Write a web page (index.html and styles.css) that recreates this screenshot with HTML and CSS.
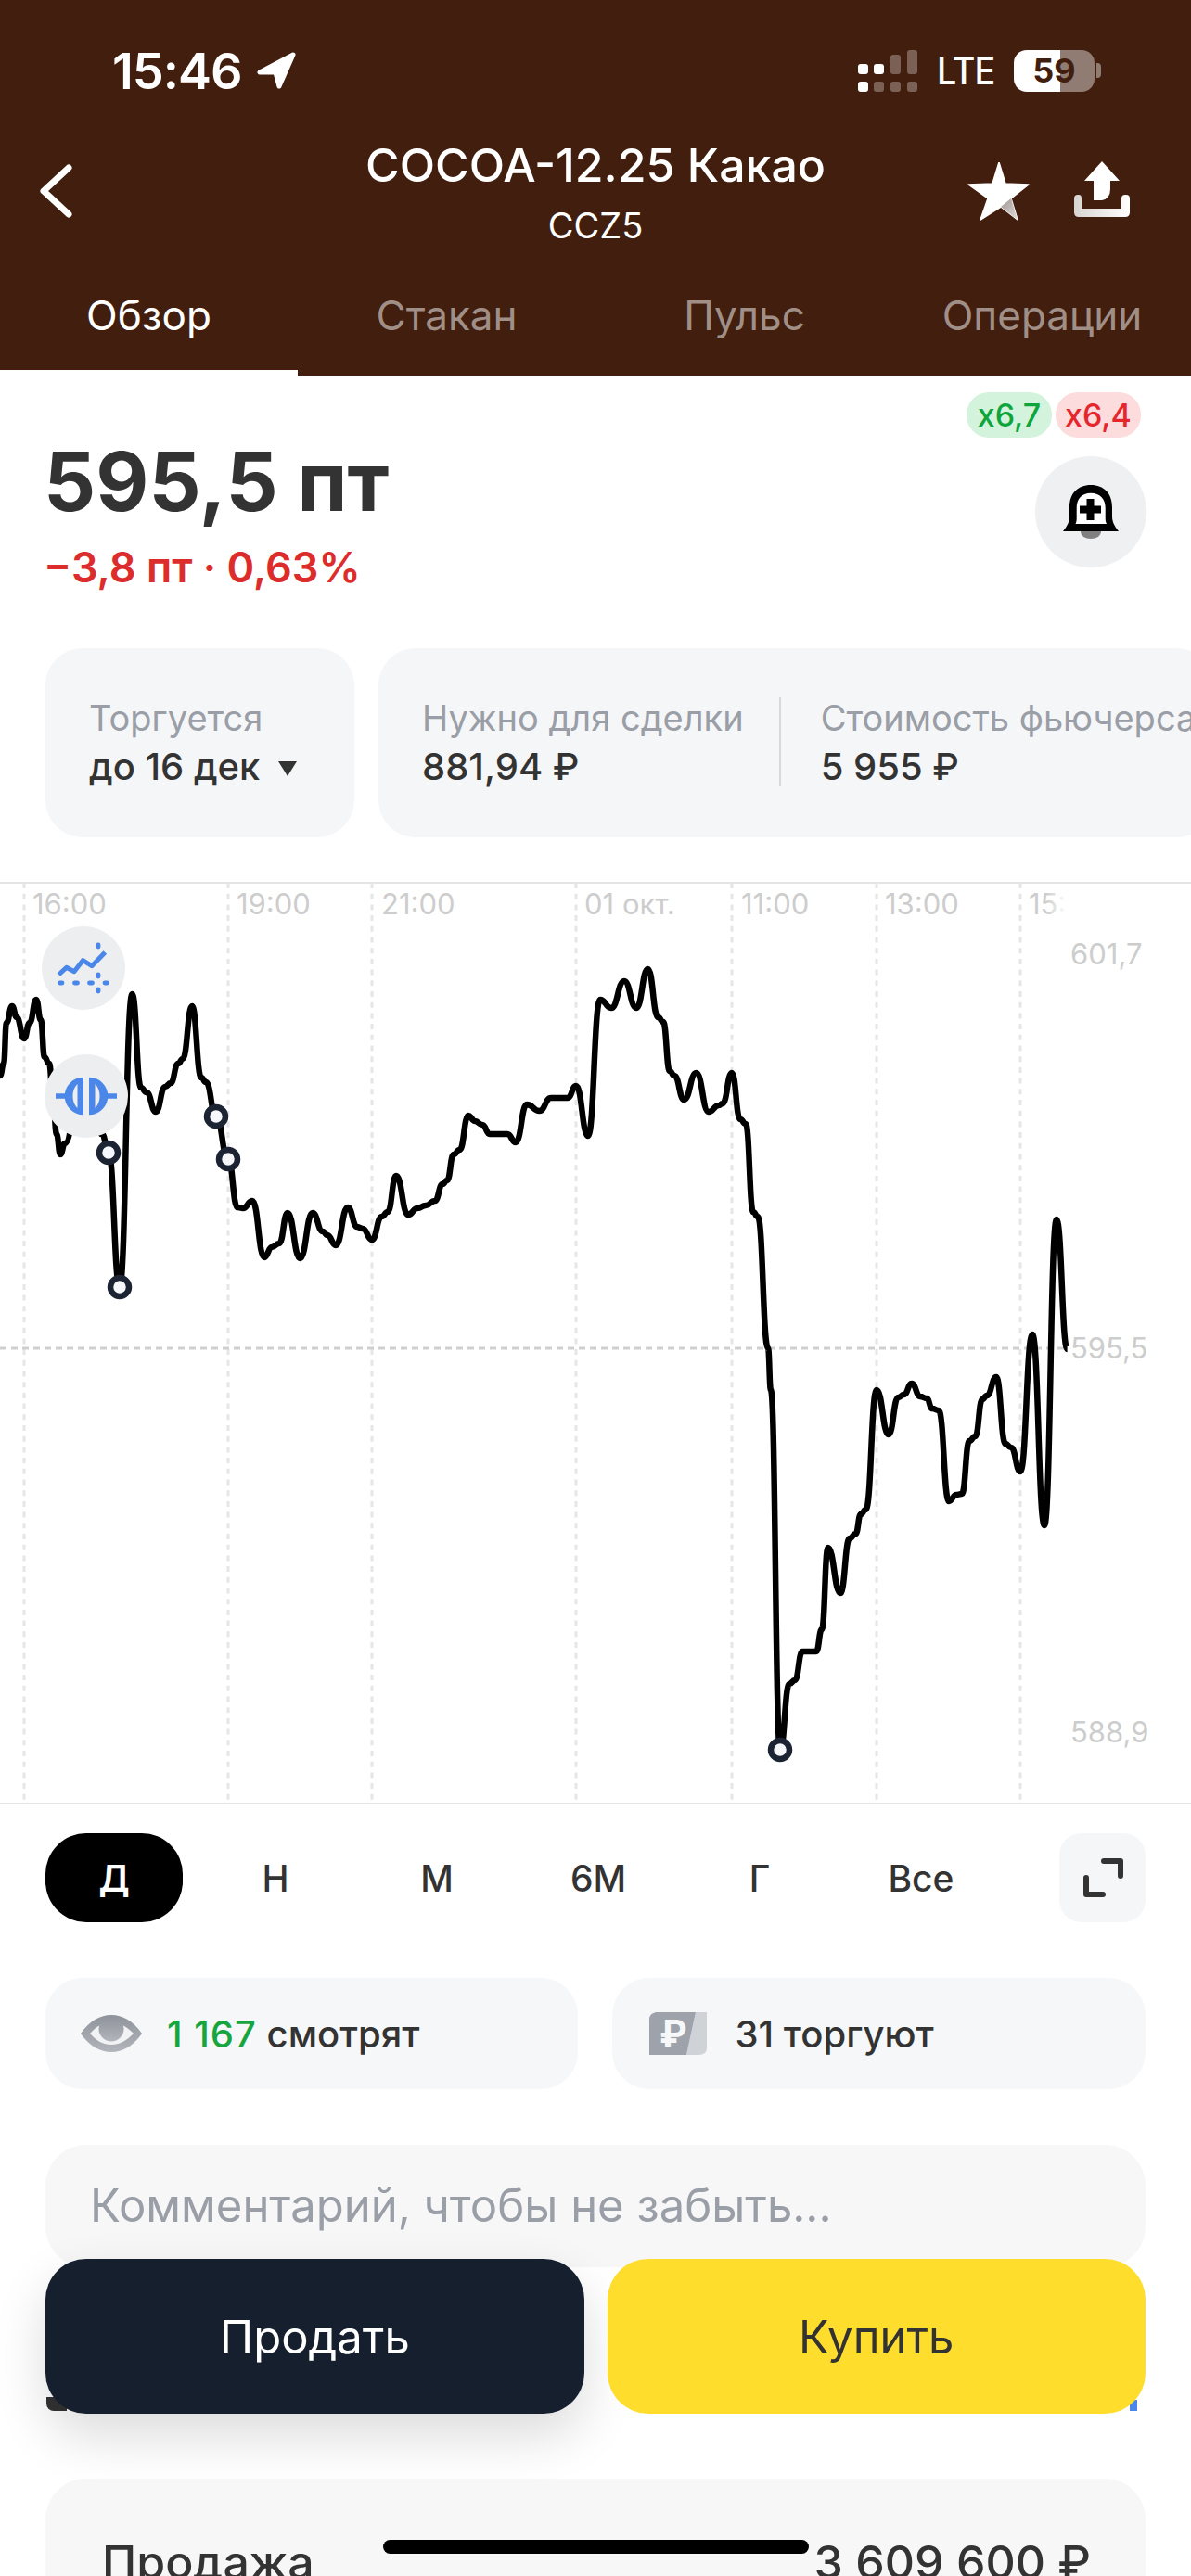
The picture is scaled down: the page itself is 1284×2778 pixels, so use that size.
FILE: index.html
```html
<!DOCTYPE html>
<html lang="ru">
<head>
    <meta charset="UTF-8">
    <meta name="viewport" content="width=device-width, initial-scale=1.0">
    <title>COCOA-12.25 Какао</title>
    <link rel="stylesheet" href="styles.css">
</head>
<body>
    <header class="top">
        <div class="status">
            <div class="status-left">
                <span class="clock">15:46</span>
                <svg class="icon-location" viewBox="277 57 42 40"><path d="M316 60 L280 79 H297 L301 94 Z"/></svg>
            </div>
            <div class="status-right">
                <svg class="icon-signal" viewBox="925 53 65 45">
                    <rect class="on" x="925" y="68" width="11" height="11" rx="3"/>
                    <rect class="on" x="925" y="87" width="11" height="11" rx="3"/>
                    <rect class="on" x="942" y="68" width="11" height="11" rx="3"/>
                    <rect class="off" x="942" y="87" width="11" height="11" rx="3"/>
                    <rect class="off" x="960" y="58" width="11" height="21" rx="3"/>
                    <rect class="off" x="960" y="87" width="11" height="11" rx="3"/>
                    <rect class="off" x="978" y="53" width="11" height="26" rx="3"/>
                    <rect class="off" x="978" y="87" width="11" height="11" rx="3"/>
                </svg>
                <span class="lte">LTE</span>
                <div class="battery">59</div>
                <div class="battery-nub"></div>
            </div>
        </div>

        <div class="nav">
            <svg class="icon-back" viewBox="43 177 35 58"><path d="M74 181 L47 206 L74 231"/></svg>
            <div class="nav-title">
                <div class="title">COCOA-12.25 Какао</div>
                <div class="ticker">CCZ5</div>
            </div>
            <div class="nav-actions">
                <svg class="icon-star" viewBox="1043 175 68 64">
                    <defs>
                        <linearGradient id="starFade" x1="0" y1="0" x2="1" y2="1">
                            <stop offset="0" stop-color="#9d9390"/>
                            <stop offset="1" stop-color="#e2dedc"/>
                        </linearGradient>
                    </defs>
                    <polygon class="star-main" points="1077,175 1084,198 1109,199 1090,214 1097,237 1079,223 1057,237 1065,214 1044,199 1070,198"/>
                    <polygon class="star-shade" points="1079,223 1097,237 1090,214"/>
                </svg>
                <svg class="icon-share" viewBox="1158 174 60 60">
                    <defs>
                        <linearGradient id="trayFade" x1="0" y1="0" x2="1" y2="0">
                            <stop offset="0" stop-color="#d8d4d1"/>
                            <stop offset="1" stop-color="#fff"/>
                        </linearGradient>
                    </defs>
                    <path class="share-tray" d="M1162 210 H1163 Q1166 210 1166 214 V225 H1209 V214 Q1209 210 1213 210 H1214 Q1218 210 1218 214 V229 Q1218 234 1213 234 H1163 Q1158 234 1158 229 V214 Q1158 210 1162 210 Z"/>
                    <path class="share-arrow" d="M1188 174 L1207 195 H1197 V204 Q1197 214 1188 216 H1179 V195 H1169 Z"/>
                </svg>
            </div>
        </div>

        <nav class="tabs">
            <a class="tab active">Обзор</a>
            <a class="tab">Стакан</a>
            <a class="tab">Пульс</a>
            <a class="tab">Операции</a>
        </nav>
    </header>

    <main>
        <section class="summary">
            <div class="quote">
                <div class="price">595,5 пт</div>
                <div class="change">−3,8 пт · 0,63%</div>
            </div>
            <div class="summary-side">
                <div class="leverage">
                    <span class="pill pill-green">x6,7</span>
                    <span class="pill pill-red">x6,4</span>
                </div>
                <button class="bell-btn">
                    <svg class="icon-bell" viewBox="0 0 60 58">
                        <path class="bell-clapper" d="M19 50 H41 C41 55 36 58 30 58 C24 58 19 55 19 50 Z"/>
                        <path d="M30 0 C16 0 7 9 7 24 V34 C7 39 5 44 0 50 H60 C55 44 53 39 53 34 V24 C53 9 44 0 30 0 Z"/>
                        <path class="bell-inner" d="M30 8.7 C20 8.7 14.7 15 14.7 25 V36 C14.7 38 14.5 40 13.5 42 H47 C46 40 45.7 38 45.7 36 V25 C45.7 15 40 8.7 30 8.7 Z"/>
                        <path d="M25.5 15 H33.5 V22.5 H41 V30.5 H33.5 V38 H25.5 V30.5 H18 V22.5 H25.5 Z"/>
                    </svg>
                </button>
            </div>
        </section>

        <section class="info-row">
            <div class="info-card">
                <div class="info-item">
                    <div class="info-label">Торгуется</div>
                    <div class="info-value">до 16 дек <span class="caret"></span></div>
                </div>
            </div>
            <div class="info-card info-card-wide">
                <div class="info-item">
                    <div class="info-label">Нужно для сделки</div>
                    <div class="info-value">881,94 ₽</div>
                </div>
                <div class="info-divider"></div>
                <div class="info-item">
                    <div class="info-label">Стоимость фьючерса</div>
                    <div class="info-value">5 955 ₽</div>
                </div>
            </div>
        </section>

        <section class="chart">
            <svg class="chart-svg" viewBox="0 951 1284 995">
                <defs>
                    <linearGradient id="labelFade" gradientUnits="userSpaceOnUse" x1="1128" y1="0" x2="1150" y2="0">
                        <stop offset="0" stop-color="#cdcdcd"/>
                        <stop offset="1" stop-color="#cdcdcd" stop-opacity="0"/>
                    </linearGradient>
                </defs>
                <line class="edge" x1="0" y1="952" x2="1284" y2="952"/>
                <line class="edge" x1="0" y1="1945" x2="1284" y2="1945"/>
                <line class="grid-v" x1="26" y1="952" x2="26" y2="1944"/>
                <line class="grid-v" x1="246" y1="952" x2="246" y2="1944"/>
                <line class="grid-v" x1="401" y1="952" x2="401" y2="1944"/>
                <line class="grid-v" x1="621" y1="952" x2="621" y2="1944"/>
                <line class="grid-v" x1="789" y1="952" x2="789" y2="1944"/>
                <line class="grid-v" x1="945" y1="952" x2="945" y2="1944"/>
                <line class="grid-v" x1="1100" y1="952" x2="1100" y2="1944"/>
                <line class="grid-h" x1="0" y1="1454" x2="1152" y2="1454"/>

                <text class="axis" x="35" y="986">16:00</text>
                <text class="axis" x="255" y="986">19:00</text>
                <text class="axis" x="411" y="986">21:00</text>
                <text class="axis" x="630" y="986">01 окт.</text>
                <text class="axis" x="799" y="986">11:00</text>
                <text class="axis" x="954" y="986">13:00</text>
                <text class="axis-fade" x="1109" y="986">15:00</text>
                <text class="axis" x="1154" y="1040">601,7</text>
                <text class="axis" x="1154" y="1465">595,5</text>
                <text class="axis" x="1154" y="1879">588,9</text>

                <path id="price-line" class="price-line" d=""/>

                <circle class="marker" cx="117" cy="1243" r="10"/>
                <circle class="marker" cx="129" cy="1388" r="10"/>
                <circle class="marker" cx="233" cy="1204" r="10"/>
                <circle class="marker" cx="246" cy="1250" r="10"/>
                <circle class="marker" cx="841" cy="1887" r="10"/>
            </svg>

            <button class="chart-btn chart-btn-lines">
                <svg viewBox="45 999 90 90">
                    <path class="ico-line" d="M63.3 1051 L71.7 1043.3 L80 1047.7 L89.3 1035.7 L99 1041.7 L113.3 1027"/>
                    <path class="ico-dash" d="M106 1019 V1021 M106 1051 V1053 M106 1067 V1069 M64.5 1060 H67 M80.5 1060 H83.5 M96.5 1060 H99.5 M113 1060 H115.5"/>
                </svg>
            </button>
            <button class="chart-btn chart-btn-split">
                <svg viewBox="48 1137 90 90">
                    <path class="ico-fill" d="M90 1161.7 A20.3 20.3 0 0 0 90 1202.3 Z M96 1161.7 A20.3 20.3 0 0 1 96 1202.3 Z"/>
                    <path class="ico-gap" d="M83.5 1169 C79.5 1173 78.5 1178 78.5 1182 C78.5 1186 79.5 1191 83.5 1195 Z M102.5 1169 C106.5 1173 107.5 1178 107.5 1182 C107.5 1186 106.5 1191 102.5 1195 Z"/>
                    <path class="ico-line ico-stem" d="M60 1182 H72 M114 1182 H126"/>
                </svg>
            </button>
        </section>

        <section class="range-row">
            <button class="range-tab active">Д</button>
            <button class="range-tab">Н</button>
            <button class="range-tab">М</button>
            <button class="range-tab">6М</button>
            <button class="range-tab">Г</button>
            <button class="range-tab">Все</button>
            <button class="expand-btn">
                <svg viewBox="1141 1977 93 96"><path d="M1189 2007 H1207 V2023 M1170 2025 V2043 H1188"/></svg>
            </button>
        </section>

        <section class="stats-row">
            <div class="stat-card">
                <svg class="icon-eye" viewBox="0 0 66 40">
                    <defs>
                        <linearGradient id="eyeFade" x1="0" y1="0" x2="0" y2="1">
                            <stop offset="0" stop-color="#8f939b"/>
                            <stop offset="1" stop-color="#b2b5bb"/>
                        </linearGradient>
                    </defs>
                    <path class="eye-outer" d="M0 20 C10 6 21 0 33 0 C45 0 56 6 66 20 C56 34 45 40 33 40 C21 40 10 34 0 20 Z"/>
                    <path class="eye-white" d="M10 20 C17 12 24 8 33 8 C42 8 49 12 57 20 C49 28 42 32 33 32 C24 32 17 28 10 20 Z"/>
                    <circle class="eye-iris" cx="33" cy="15" r="13.5"/>
                </svg>
                <span class="stat-text"><b class="stat-num">1 167</b> смотрят</span>
            </div>
            <div class="stat-card">
                <svg class="icon-rub" viewBox="0 0 62 46">
                    <path class="rub-back" d="M50 0 H62 V39 Q62 46 53 46 H40 Z"/>
                    <path class="rub-front" d="M7 0 H50 L40 46 H0 V7 Q0 2 7 0 Z"/>
                    <text class="rub-sign" x="11" y="37">₽</text>
                </svg>
                <span class="stat-text">31 торгуют</span>
            </div>
        </section>

        <div class="comment">Комментарий, чтобы не забыть...</div>

        <!-- строка из следующего блока, почти вся под кнопками -->
        <div class="peek">
            <span class="peek-dark"></span>
            <span class="peek-blue"></span>
        </div>

        <section class="deal-card">
            <span>Продажа</span>
            <span>3 609 600 ₽</span>
        </section>
    </main>

    <div class="trade-bar">
        <button class="trade-btn sell">Продать</button>
        <button class="trade-btn buy">Купить</button>
    </div>
    <div class="home-indicator"></div>

    <script src="chart.js"></script>
</body>
</html>
```

FILE: styles.css
```css
* {
    box-sizing: border-box;
}
html, body {
    margin: 0;
    padding: 0;
}
body {
    position: relative;
    width: 1284px;
    height: 2778px;
    overflow: hidden;
    background-color: #fff;
    color: #333;
    font-family: Inter, "Noto Sans", sans-serif;
}
button {
    border: 0;
    padding: 0;
    font-family: inherit;
}
svg {
    display: block;
}

/* верхняя коричневая шапка */
.top {
    height: 405px;
    background-color: #421e0e;
    color: #fff;
}
.status {
    display: flex;
    justify-content: space-between;
    align-items: center;
    height: 130px;
    padding: 52px 97px 30px 121px;
}
.status-left, .status-right {
    display: flex;
    align-items: center;
}
.clock {
    width: 156px;
    font-size: 54px;
    font-weight: 600;
    letter-spacing: -1px;
}
.icon-location {
    width: 42px;
    height: 40px;
    fill: #fff;
    stroke: #fff;
    stroke-width: 5;
    stroke-linejoin: round;
}
.icon-signal {
    width: 65px;
    height: 45px;
    margin-right: 20px;
}
.icon-signal .on {
    fill: #fff;
}
.icon-signal .off {
    fill: #7b6155;
}
.lte {
    width: 83px;
    font-size: 41px;
    font-weight: 500;
    letter-spacing: -1px;
    transform: scaleX(0.92);
    transform-origin: left center;
}
.battery {
    width: 87px;
    height: 45px;
    border-radius: 14px;
    background: linear-gradient(90deg, #fff 58%, rgba(255, 255, 255, 0.42) 58%);
    color: #421e0e;
    font-size: 36px;
    font-weight: 700;
    line-height: 45px;
    text-align: center;
}
.battery-nub {
    width: 5px;
    height: 16px;
    margin-left: 2px;
    border-radius: 0 4px 4px 0;
    background-color: rgba(255, 255, 255, 0.42);
}

.nav {
    display: grid;
    grid-template-columns: 1fr auto 1fr;
    align-items: start;
    height: 170px;
    padding: 20px 43px 0 43px;
}
.icon-back {
    width: 35px;
    height: 58px;
    margin-top: 27px;
    fill: none;
    stroke: #fff;
    stroke-width: 7;
    stroke-linecap: round;
    stroke-linejoin: round;
}
.nav-title {
    text-align: center;
}
.title {
    font-size: 50px;
    font-weight: 500;
    line-height: 56px;
}
.ticker {
    margin-top: 15px;
    font-size: 38px;
    line-height: 44px;
}
.nav-actions {
    display: flex;
    justify-content: flex-end;
    gap: 47px;
    margin: 24px 23px 0 0;
}
.icon-star {
    width: 68px;
    height: 64px;
    margin-top: 1px;
}
.star-main {
    fill: #fff;
    stroke: #fff;
    stroke-width: 1.5;
    stroke-linejoin: round;
}
.star-shade {
    fill: url(#starFade);
}
.icon-share {
    width: 60px;
    height: 60px;
}
.share-tray {
    fill: url(#trayFade);
}
.share-arrow {
    fill: #fff;
}

.tabs {
    display: grid;
    grid-template-columns: repeat(4, 1fr);
    height: 105px;
}
.tab {
    padding-top: 17px;
    color: #a08f87;
    font-size: 44px;
    line-height: 46px;
    text-align: center;
}
.tab.active {
    border-bottom: 6px solid #fff;
    color: #fff;
}

/* цена */
.summary {
    display: flex;
    justify-content: space-between;
    height: 294px;
    padding: 0 48px 0 47px;
}
.quote {
    padding-top: 64px;
}
.price {
    color: #333;
    font-size: 88px;
    font-weight: 700;
    line-height: 100px;
}
.change {
    margin-top: 13px;
    color: #dd2c2c;
    font-size: 45px;
    font-weight: 600;
    line-height: 60px;
}
.summary-side {
    display: flex;
    flex-direction: column;
    align-items: flex-end;
    padding-top: 18px;
}
.leverage {
    display: flex;
    gap: 4px;
    margin-right: 6px;
}
.pill {
    width: 92px;
    height: 49px;
    border-radius: 24px;
    font-size: 34px;
    font-weight: 500;
    line-height: 49px;
    text-align: center;
}
.pill-green {
    background-color: #d4f3dc;
    color: #0ea53c;
}
.pill-red {
    background-color: #fcdcdc;
    color: #e5262c;
}
.bell-btn {
    display: flex;
    align-items: center;
    justify-content: center;
    width: 120px;
    height: 120px;
    margin-top: 20px;
    border-radius: 50%;
    background-color: #eef0f1;
}
.icon-bell {
    width: 60px;
    height: 58px;
    fill: #000;
}
.bell-inner {
    fill: #fff;
}
.bell-clapper {
    fill: #808080;
}

/* карточки условий */
.info-row {
    display: flex;
    gap: 26px;
    padding-left: 49px;
    overflow: hidden;
}
.info-card {
    display: flex;
    flex-shrink: 0;
    align-items: center;
    width: 333px;
    height: 204px;
    padding: 0 0 3px 47px;
    border-radius: 40px;
    background-color: #f5f6f8;
}
.info-card-wide {
    width: 900px;
}
.info-label {
    color: #9a9ea6;
    font-size: 38px;
    line-height: 50px;
    white-space: nowrap;
}
.info-value {
    margin-top: 5px;
    color: #333;
    font-size: 40px;
    font-weight: 500;
    line-height: 46px;
    white-space: nowrap;
}
.caret {
    display: inline-block;
    margin-left: 9px;
    border-top: 16px solid #333;
    border-left: 10px solid transparent;
    border-right: 10px solid transparent;
    vertical-align: 4px;
}
.info-divider {
    width: 2px;
    height: 96px;
    margin: 0 43px 0 38px;
    background-color: #d5d8dc;
}

/* график */
.chart {
    position: relative;
    height: 995px;
    margin-top: 48px;
}
.chart-svg {
    width: 1284px;
    height: 995px;
}
.edge {
    stroke: #e3e4e6;
    stroke-width: 2;
}
.grid-v {
    stroke: #e6e6e6;
    stroke-width: 3;
    stroke-dasharray: 6 5.7;
}
.grid-h {
    stroke: #cfcfcf;
    stroke-width: 3;
    stroke-dasharray: 7 5;
}
.axis, .axis-fade {
    fill: #cdcdcd;
    font-size: 31px;
}
.axis-fade {
    fill: url(#labelFade);
}
.price-line {
    fill: none;
    stroke: #000;
    stroke-width: 6.5;
    stroke-linejoin: round;
}
.marker {
    fill: #f5f7fa;
    stroke: #1c2433;
    stroke-width: 6.5;
}
.chart-btn {
    position: absolute;
    width: 90px;
    height: 90px;
    border-radius: 50%;
    background-color: #edeef0;
}
.chart-btn-lines {
    top: 48px;
    left: 45px;
}
.chart-btn-split {
    top: 186px;
    left: 48px;
}
.chart-btn svg {
    width: 90px;
    height: 90px;
}
.ico-line {
    fill: none;
    stroke: #4a87e8;
    stroke-width: 5;
    stroke-linejoin: round;
}
.ico-stem {
    stroke-width: 5.5;
}
.ico-dash {
    fill: none;
    stroke: #4a87e8;
    stroke-width: 4.8;
    stroke-linecap: round;
}
.ico-fill {
    fill: #4a87e8;
}
.ico-gap {
    fill: #edeef0;
}

/* периоды */
.range-row {
    display: flex;
    align-items: center;
    margin-top: 31px;
    padding: 0 49px 0 36px;
}
.range-tab {
    width: 174px;
    height: 96px;
    background: none;
    color: #333;
    font-size: 39px;
    font-weight: 500;
}
.range-tab.active {
    width: 148px;
    margin: 0 13px;
    border-radius: 44px;
    background-color: #000;
    color: #fff;
    font-weight: 600;
}
.expand-btn {
    width: 93px;
    height: 96px;
    margin-left: auto;
    border-radius: 24px;
    background-color: #f5f6f8;
}
.expand-btn svg {
    width: 93px;
    height: 96px;
    fill: none;
    stroke: #333;
    stroke-width: 6;
    stroke-linecap: round;
    stroke-linejoin: round;
}

/* смотрят / торгуют */
.stats-row {
    display: flex;
    gap: 37px;
    margin-top: 60px;
    padding: 0 49px;
}
.stat-card {
    display: flex;
    flex: 1;
    align-items: center;
    height: 120px;
    padding-left: 38px;
    border-radius: 40px;
    background-color: #f6f7f9;
}
.stat-card:last-child {
    padding-left: 40px;
}
.icon-eye {
    width: 66px;
    height: 40px;
    margin-right: 27px;
}
.eye-outer, .eye-iris {
    fill: url(#eyeFade);
}
.eye-white {
    fill: #f1f2f4;
}
.icon-rub {
    width: 62px;
    height: 46px;
    margin-right: 31px;
}
.rub-back {
    fill: #cfd2d7;
}
.rub-front {
    fill: #9ea2aa;
}
.rub-sign {
    fill: #f6f7f9;
    font-size: 40px;
    font-weight: 700;
}
.stat-text {
    color: #333;
    font-size: 40px;
    font-weight: 500;
}
.stat-num {
    color: #16a53f;
    font-weight: 500;
    letter-spacing: 1px;
}

.comment {
    height: 132px;
    margin: 60px 49px 0;
    padding-left: 48px;
    border-radius: 44px;
    background-color: #f7f7f8;
    color: #9a9ea6;
    font-size: 49px;
    line-height: 132px;
}

.peek {
    display: flex;
    justify-content: space-between;
    height: 20px;
    margin-top: 140px;
    padding: 0 58px 0 50px;
}
.peek-dark {
    width: 22px;
    height: 15px;
    border-radius: 0 0 0 8px;
    background-color: #333;
}
.peek-blue {
    width: 8px;
    height: 12px;
    margin-top: 3px;
    background-color: #4a87e8;
}

.deal-card {
    display: flex;
    justify-content: space-between;
    height: 200px;
    margin: 68px 49px 0;
    padding: 60px 59px 0 61px;
    border-radius: 44px;
    background-color: #f7f7f8;
    color: #333;
    font-size: 50px;
    font-weight: 500;
    line-height: 60px;
}

/* кнопки поверх контента */
.trade-bar {
    position: absolute;
    left: 49px;
    right: 49px;
    bottom: 175px;
    display: flex;
    gap: 25px;
}
.trade-btn {
    flex: 1;
    height: 167px;
    padding-top: 2px;
    border-radius: 44px;
    font-size: 49px;
}
.sell {
    background-color: #161f2e;
    box-shadow: 0 24px 56px rgba(0, 0, 0, 0.14);
    color: #fff;
}
.buy {
    background-color: #ffdd2d;
    color: #333;
}
.home-indicator {
    position: absolute;
    top: 2739px;
    left: 413px;
    width: 459px;
    height: 15px;
    border-radius: 8px;
    background-color: #000;
}
```

FILE: chart.js
```javascript
// Точки цены: координаты в системе viewBox графика
const points = [
    [0,1160],[4,1147],[7,1103],[13,1085],[18,1097],[26,1120],[32,1103],[39,1078],[44,1100],[48,1140],[53,1147],
    [57,1180],[61,1223],[65,1245],[70,1233],[88,1150],[110,1223],[117,1243],[129,1388],[142.5,1072],[152,1173],
    [158,1178],[168,1199],[178,1172],[184,1168],[192,1147],[197,1142],[207,1085],[217,1162],[222,1167],[233,1204],
    [246,1250],[256,1302],[262,1303],[272,1295],[285,1356],[293,1345],[301,1341],[310,1308],[323.5,1357],[337,1308],
    [348,1328],[353,1332],[362,1343],[375,1302],[385,1323],[391,1325],[401,1337],[411.5,1312],[418,1307],[427,1268],
    [440,1310],[450,1303],[459,1300],[469,1295],[477,1277],[482,1273],[489,1245],[495.5,1240],[505,1203],[512,1209],
    [520,1213],[528,1223],[547,1223],[556,1232],[568,1191],[581.5,1198],[594,1184],[612,1184],[621,1171],[634,1225],
    [647,1078],[659,1087],[673,1058],[686,1087],[698.5,1045],[709.5,1097],[715,1102],[722,1155],[727,1160],[737.5,1186],
    [750.5,1157],[764,1199],[775,1192],[779,1190],[789,1157],[798,1207],[804,1212],[812,1307],[817,1312],[828,1454],
    [831,1499],[841,1887],[851,1816],[857,1812],[865,1781],[880,1781],[886,1757],[892.6,1669],[906,1718],[916,1659],
    [922.5,1654],[928,1633],[933.5,1628],[945,1499],[958,1547],[968.4,1507],[974.5,1504],[983,1492],[992,1506],[999,1508],
    [1005,1519],[1012,1521],[1023,1619],[1031,1612],[1037,1611],[1045,1554],[1051.5,1549],[1059,1509],[1064,1505],[1074,1485],
    [1084,1557],[1090,1561],[1100,1587],[1113,1439],[1126,1645],[1139,1315],[1150.6,1455]
];

// Плавная кривая: касательные в точках горизонтальные
let d = `M${points[0][0]} ${points[0][1]}`;
for (let i = 1; i < points.length; i++) {
    const [x0, y0] = points[i - 1];
    const [x1, y1] = points[i];
    const mid = (x0 + x1) / 2;
    d += ` C${mid} ${y0} ${mid} ${y1} ${x1} ${y1}`;
}
document.getElementById('price-line').setAttribute('d', d);
```
